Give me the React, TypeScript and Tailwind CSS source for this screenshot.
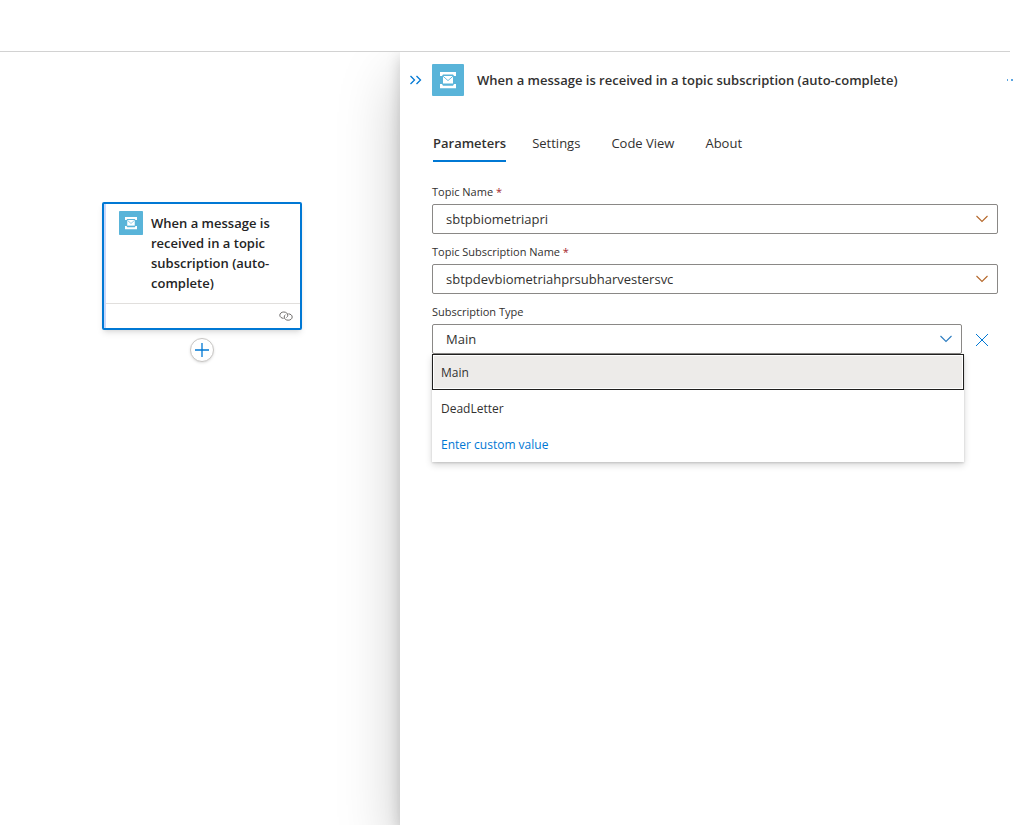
import { useState } from "react";

const tabs = ["Parameters", "Settings", "Code View", "About"];

const topics = ["sbtpbiometriapri"];
const subscriptions = ["sbtpdevbiometriahprsubharvestersvc"];
const subscriptionTypes = ["Main", "DeadLetter"];

function ServiceBusIcon({ className }: { className?: string }) {
  return (
    <svg viewBox="0 0 32 32" className={className} aria-hidden="true">
      <rect width="32" height="32" rx="1" fill="#59b4d9" />
      <path d="M8 8h16v4h-2l-1-1.5H11L10 12H8z" fill="#fff" />
      <path d="M8 24.2h16V20h-2l-1 1.7H11L10 20H8z" fill="#fff" />
      <rect x="11" y="12" width="10" height="7.5" fill="#fff" />
      <path d="M11 12.2l5 4.4 5-4.4" fill="none" stroke="#59b4d9" strokeWidth="0.9" />
    </svg>
  );
}

function Chevron({ color }: { color: string }) {
  return (
    <svg
      viewBox="0 0 12 12"
      className="pointer-events-none absolute top-2 right-2.5 h-3 w-3"
      aria-hidden="true"
    >
      <path d="M0.5 4L6 9.5 11.5 4" fill="none" stroke={color} strokeWidth="1.1" />
    </svg>
  );
}

interface FieldProps {
  id: string;
  label: string;
  required?: boolean;
  children: React.ReactNode;
}

function Field({ id, label, required, children }: FieldProps) {
  return (
    <div>
      <label htmlFor={id} className="block text-[11px] leading-6 text-[#323130]">
        {label}
        {required && <span className="text-[#a4262c]"> *</span>}
      </label>
      {children}
    </div>
  );
}

interface DropdownProps {
  id: string;
  value: string;
  options: string[];
  chevron: string;
  onChange: (value: string) => void;
}

function Dropdown({ id, value, options, chevron, onChange }: DropdownProps) {
  return (
    <div className="relative">
      <select
        id={id}
        value={value}
        onChange={(e) => onChange(e.target.value)}
        className="block h-[30px] w-full appearance-none rounded-xs border border-[#8a8886] bg-white px-[13px] pt-0.5 text-[13px] text-[#323130] outline-none"
      >
        {options.map((option) => (
          <option key={option}>{option}</option>
        ))}
      </select>
      <Chevron color={chevron} />
    </div>
  );
}

export default function App() {
  const [activeTab, setActiveTab] = useState("Parameters");
  const [topic, setTopic] = useState(topics[0]);
  const [subscription, setSubscription] = useState(subscriptions[0]);
  const [type, setType] = useState("Main");

  return (
    <div className="flex h-screen flex-col overflow-hidden bg-white font-['Open_Sans',sans-serif] text-[#323130]">
      <header className="mr-1 h-[52px] shrink-0 border-b border-[#d2d2d2]" />

      <div className="flex min-h-0 flex-1 overflow-hidden">
        {/* Designer canvas */}
        <main className="flex w-[400px] shrink-0 flex-col items-center pt-[150px] pl-1">
          <div className="w-[200px] rounded-xs border-2 border-[#0078d4] bg-white shadow-md">
            <div className="border-l-2 border-[#c8d8fb]">
              <div className="flex gap-2 border-b border-[#e1dfdd] px-[13px] pt-[7px] pb-2.5">
                <ServiceBusIcon className="h-6 w-6 shrink-0" />
                <h2 className="pt-0.5 text-[13px] leading-5 font-semibold text-[#242424]">
                  When a message is received in a topic subscription (auto-complete)
                </h2>
              </div>
              <div className="flex h-6 items-center justify-end pr-[7px]">
                <svg viewBox="0 0 14 10" className="h-[10px] w-[14px]" aria-label="Connection">
                  <g fill="none" stroke="#605e5c" strokeWidth="0.9">
                    <path d="M4.6 7.4C2.4 7.2.8 5.900.8 4.200.8 2.400 2.500 1 4.800 1s4 1.400 4 3.200c0 1-.5 1.800-1.400 2.400" />
                    <path d="M9.400 2.800c2.200.2 3.800 1.500 3.800 3.200 0 1.800-1.700 3.200-4 3.200s-4-1.400-4-3.200c0-1 .5-1.800 1.400-2.400" />
                  </g>
                </svg>
              </div>
            </div>
          </div>
          <button
            aria-label="Add an action"
            className="mt-2 flex h-6 w-6 items-center justify-center rounded-full border border-[#c8c6c4] bg-white shadow-sm"
          >
            <svg viewBox="0 0 14 14" className="h-[14px] w-[14px]" aria-hidden="true">
              <path d="M7 0v14M0 7h14" stroke="#0078d4" strokeWidth="1.3" />
            </svg>
          </button>
        </main>

        {/* Operation panel */}
        <aside className="min-w-0 flex-1 bg-white shadow-[0_26px_58px_0_rgba(0,0,0,0.22),0_5px_14px_0_rgba(0,0,0,0.18)]">
          <div className="flex items-center pt-3">
            <button aria-label="Collapse panel" className="flex w-8 justify-center">
              <svg viewBox="0 0 12 10" className="h-[10px] w-3" aria-hidden="true">
                <path
                  d="M0.5 1l4 4-4 4M6.5 1l4 4-4 4"
                  fill="none"
                  stroke="#0078d4"
                  strokeWidth="1.3"
                />
              </svg>
            </button>
            <ServiceBusIcon className="h-8 w-8 shrink-0" />
            <h1 className="flex-1 truncate pl-[13px] text-[13px] leading-5 font-semibold">
              When a message is received in a topic subscription (auto-complete)
            </h1>
            <button aria-label="More options" className="w-2 overflow-hidden">
              <svg viewBox="0 0 12 2" className="h-0.5 w-3 max-w-none" aria-hidden="true">
                <path d="M1 0h1v2H1zM5 0h2v2H5zM9 0h2v2H9z" fill="#5ba5e0" />
              </svg>
            </button>
          </div>

          <div className="pr-4 pl-8">
            <div role="tablist" className="mt-7 flex gap-[26px] pl-px">
              {tabs.map((tab) => (
                <button
                  key={tab}
                  role="tab"
                  aria-selected={activeTab === tab}
                  onClick={() => setActiveTab(tab)}
                  className={
                    activeTab === tab
                      ? "h-[38px] border-b-2 border-[#0078d4] pt-1 text-[13px] font-semibold"
                      : "h-[38px] border-b-2 border-transparent pt-1 pr-[5px] text-[13px]"
                  }
                >
                  {tab}
                </button>
              ))}
            </div>

            <form className="mt-[18px] flex flex-col gap-1.5">
              <Field id="topic" label="Topic Name" required>
                <Dropdown
                  id="topic"
                  value={topic}
                  options={topics}
                  chevron="#b5672a"
                  onChange={setTopic}
                />
              </Field>
              <Field id="subscription" label="Topic Subscription Name" required>
                <Dropdown
                  id="subscription"
                  value={subscription}
                  options={subscriptions}
                  chevron="#b5672a"
                  onChange={setSubscription}
                />
              </Field>
              <Field id="type" label="Subscription Type">
                <div className="flex gap-1">
                  <div className="relative flex-1">
                    <Dropdown
                      id="type"
                      value={type}
                      options={subscriptionTypes}
                      chevron="#2b7cc0"
                      onChange={setType}
                    />
                    <div className="absolute top-full -right-0.5 left-0 flex flex-col bg-white text-[12px] shadow-[0_3px_7px_0_rgba(0,0,0,0.16),0_1px_2px_0_rgba(0,0,0,0.14)]">
                      {subscriptionTypes.map((option) => (
                        <button
                          key={option}
                          type="button"
                          onClick={() => setType(option)}
                          className={
                            type === option
                              ? "h-9 border border-[#201f1e] bg-[#edebe9] px-2 pt-0.5 text-left inset-ring inset-ring-white"
                              : "h-9 border border-transparent px-2 pt-0.5 text-left"
                          }
                        >
                          {option}
                        </button>
                      ))}
                      <button
                        type="button"
                        className="h-9 border border-transparent px-2 pt-0.5 text-left text-[#0078d4]"
                      >
                        Enter custom value
                      </button>
                    </div>
                  </div>
                  <button
                    type="button"
                    aria-label="Clear subscription type"
                    className="flex w-8 items-center justify-center pt-0.5"
                  >
                    <svg viewBox="0 0 12 12" className="h-3 w-3" aria-hidden="true">
                      <path d="M0 0l12 12M12 0L0 12" stroke="#0078d4" strokeWidth="1" />
                    </svg>
                  </button>
                </div>
              </Field>
            </form>
          </div>
        </aside>
      </div>
    </div>
  );
}
